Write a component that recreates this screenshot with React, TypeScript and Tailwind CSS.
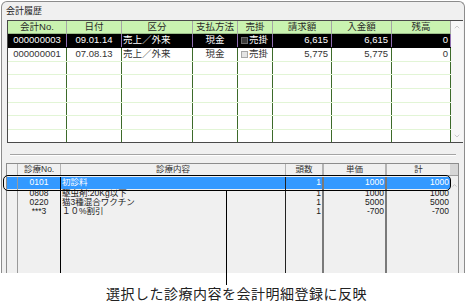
import { ChevronUp, ChevronDown } from 'lucide-react';

type TopRow = {
  no: string;
  date: string;
  kind: string;
  pay: string;
  bill: string;
  paid: string;
  rest: string;
};

const topRows: TopRow[] = [
  { no: '000000003', date: '09.01.14', kind: '売上／外来', pay: '現金', bill: '6,615', paid: '6,615', rest: '0' },
  { no: '000000001', date: '07.08.13', kind: '売上／外来', pay: '現金', bill: '5,775', paid: '5,775', rest: '0' },
];

// heights of the blank rows under the data rows
const blankRows = ['h-[13px]', 'h-[14px]', 'h-[14px]', 'h-[13px]', 'h-[14px]', 'h-[12px]'];

const topHeaders = [
  { label: '会計No.', w: 'w-[59px]' },
  { label: '日付', w: 'w-[55px]' },
  { label: '区分', w: 'w-[71px]' },
  { label: '支払方法', w: 'w-[45px]' },
  { label: '売掛', w: 'w-[35px]' },
  { label: '請求額', w: 'w-[59px]' },
  { label: '入金額', w: 'w-[60px]' },
  { label: '残高', w: 'w-[59px]' },
];

const details = [
  { code: '0101', name: '初診料', qty: '1', price: '1000', total: '1000' },
  { code: '0808', name: '駆虫剤:20Kg以下', qty: '1', price: '1000', total: '1000' },
  { code: '0220', name: '猫3種混合ワクチン', qty: '1', price: '5000', total: '5000' },
  { code: '***3', name: '１０%割引', qty: '1', price: '-700', total: '-700' },
];

function CheckCell({ selected }: { selected: boolean }) {
  return (
    <div className="flex items-center gap-[1px] pl-[3px]">
      <span
        className={`w-[7px] h-[7px] border ${
          selected ? 'bg-[#3a3a3a] border-[#6a6a6a]' : 'bg-[#e4e4e4] border-[#a8a8a8]'
        }`}
      />
      <span>売掛</span>
    </div>
  );
}

export default function App() {
  return (
    <div className="relative w-[470px] h-[302px] overflow-hidden bg-white font-['Liberation_Sans','Noto_Sans_CJK_JP',sans-serif] text-[#1a1a1a]">
      {/* Window */}
      <div className="ml-[1px] pt-[1px] w-[464px] h-[273px]">
        <div className="h-[272px] bg-[#f0f0f0] border border-b-0 border-[#8c8c8c] rounded-t-[6px] flex flex-col">
          <div className="h-[18px] pl-[4px] pt-[4px] text-[9px] leading-[10px] text-[#222]">会計履歴</div>

          {/* Account history grid */}
          <div className="ml-[5px] w-[456px] h-[123px] flex border-t border-b border-l border-[#4a4a4a] bg-white text-[9.5px]">
            <div className="w-[443px] flex flex-col">
              <div className="h-[13px] flex bg-[#c9f3b0] border-b border-[#9cbf8a]">
                {topHeaders.map((h) => (
                  <div
                    key={h.label}
                    className={`${h.w} border-r border-[#a6a6a6] flex items-center justify-center leading-[12px] text-[#2a2a2a]`}
                  >
                    {h.label}
                  </div>
                ))}
              </div>

              {topRows.map((r, i) => {
                const sel = i === 0;
                const cell = `border-r ${sel ? 'border-[#8f6fb0]' : 'border-[#3d6b2a]'} flex items-center leading-[12px]`;
                return (
                  <div
                    key={r.no}
                    className={`h-[14px] flex border-b ${sel ? 'bg-black text-white border-black' : 'bg-white text-[#333] border-[#e2f5d6]'}`}
                  >
                    <div className={`w-[59px] justify-center ${cell}`}>{r.no}</div>
                    <div className={`w-[55px] justify-center ${cell}`}>{r.date}</div>
                    <div className={`w-[71px] pl-[1px] ${cell}`}>{r.kind}</div>
                    <div className={`w-[45px] justify-center ${cell}`}>{r.pay}</div>
                    <div className={`w-[35px] ${cell}`}>
                      <CheckCell selected={sel} />
                    </div>
                    <div className={`w-[59px] justify-end pr-[3px] ${cell}`}>{r.bill}</div>
                    <div className={`w-[60px] justify-end pr-[3px] ${cell}`}>{r.paid}</div>
                    <div className={`w-[59px] justify-end pr-[2px] ${cell}`}>{r.rest}</div>
                  </div>
                );
              })}

              {blankRows.map((h, i) => (
                <div key={i} className={`${h} flex border-b border-[#e2f5d6] last:border-b-0`}>
                  {topHeaders.map((c) => (
                    <div key={c.label} className={`${c.w} border-r border-[#3d6b2a]`} />
                  ))}
                </div>
              ))}
            </div>
            <div className="w-[13px] bg-[#f6f6f6] flex flex-col items-center justify-between py-[2px]">
              <ChevronUp size={8} strokeWidth={1.5} className="text-[#9a9a9a]" />
              <ChevronDown size={8} strokeWidth={1.5} className="text-[#9a9a9a]" />
            </div>
          </div>

          {/* Etched separator */}
          <div className="mt-[11px] ml-[8px] w-[446px] h-[2px] border-t border-b border-t-[#a4a4a4] border-b-white" />

          {/* Treatment details grid */}
          <div className="mt-[7px] ml-[4px] w-[453px] h-[111px] flex flex-col border-t border-l border-r border-[#8c8c8c] text-[8.5px]">
            <div className="h-[12px] flex border-b border-[#a0a0a0] text-[#333] leading-[11px]">
              <div className="w-[11px] border-r border-[#b4b4b4]" />
              <div className="w-[43px] border-r border-[#b4b4b4] pl-[6px] flex items-center">診療No.</div>
              <div className="w-[225px] border-r border-[#b4b4b4] flex items-center justify-center">診療内容</div>
              <div className="w-[38px] border-r-2 border-[#b4b4b4] flex items-center justify-center">頭数</div>
              <div className="w-[63px] border-r-2 border-[#b4b4b4] flex items-center justify-center">単価</div>
              <div className="w-[63px] flex items-center justify-center">計</div>
              <div className="w-[8px] bg-[#d6d6d6]" />
            </div>

            {details.map((d, i) => {
              const sel = i === 0;
              return (
                <div
                  key={d.code}
                  className={`${sel ? 'h-[12px] mt-[1px] bg-[#3399ff] text-white' : 'h-[9px]'} flex leading-[9px]`}
                >
                  <div className="w-[11px] border-r border-[#9a9a9a]" />
                  <div className="w-[43px] border-r border-black flex items-center justify-center">{d.code}</div>
                  <div className="w-[225px] border-r border-[#222] flex items-center pl-[1px]">{d.name}</div>
                  <div className="w-[38px] border-r-2 border-[#7a7a7a] flex items-center justify-end pr-[1px]">{d.qty}</div>
                  <div className="w-[63px] border-r-2 border-[#7a7a7a] flex items-center justify-end pr-[1px]">{d.price}</div>
                  <div className="w-[63px] flex items-center justify-end pr-[1px]">{d.total}</div>
                  <div className={`w-[8px] bg-[#f0f0f0] flex justify-center ${sel ? 'items-end' : ''}`}>
                    {sel && <ChevronUp size={7} strokeWidth={1.5} className="text-[#8a8a8a]" />}
                  </div>
                </div>
              );
            })}

            <div className="flex-1 flex">
              <div className="w-[11px] border-r border-[#9a9a9a]" />
              <div className="w-[43px] border-r border-black" />
              <div className="w-[225px] border-r border-[#222]" />
              <div className="w-[38px] border-r-2 border-[#7a7a7a]" />
              <div className="w-[63px] border-r-2 border-[#7a7a7a]" />
              <div className="w-[63px]" />
              <div className="w-[8px]" />
            </div>
          </div>
        </div>
      </div>

      {/* Annotation */}
      <div className="w-[470px] h-[29px] pt-[14px] pl-[3px] text-center text-[14px] leading-[14px] tracking-[0.5px] text-[#222]">
        選択した診療内容を会計明細登録に反映
      </div>

      {/* Callout around the selected line and its leader */}
      <div className="absolute left-[3px] top-[175px] w-[448px] h-[16px] border-[1.5px] border-black rounded-[5px]" />
      <div className="absolute left-[226px] top-[191px] w-px h-[94px] bg-black" />
    </div>
  );
}
